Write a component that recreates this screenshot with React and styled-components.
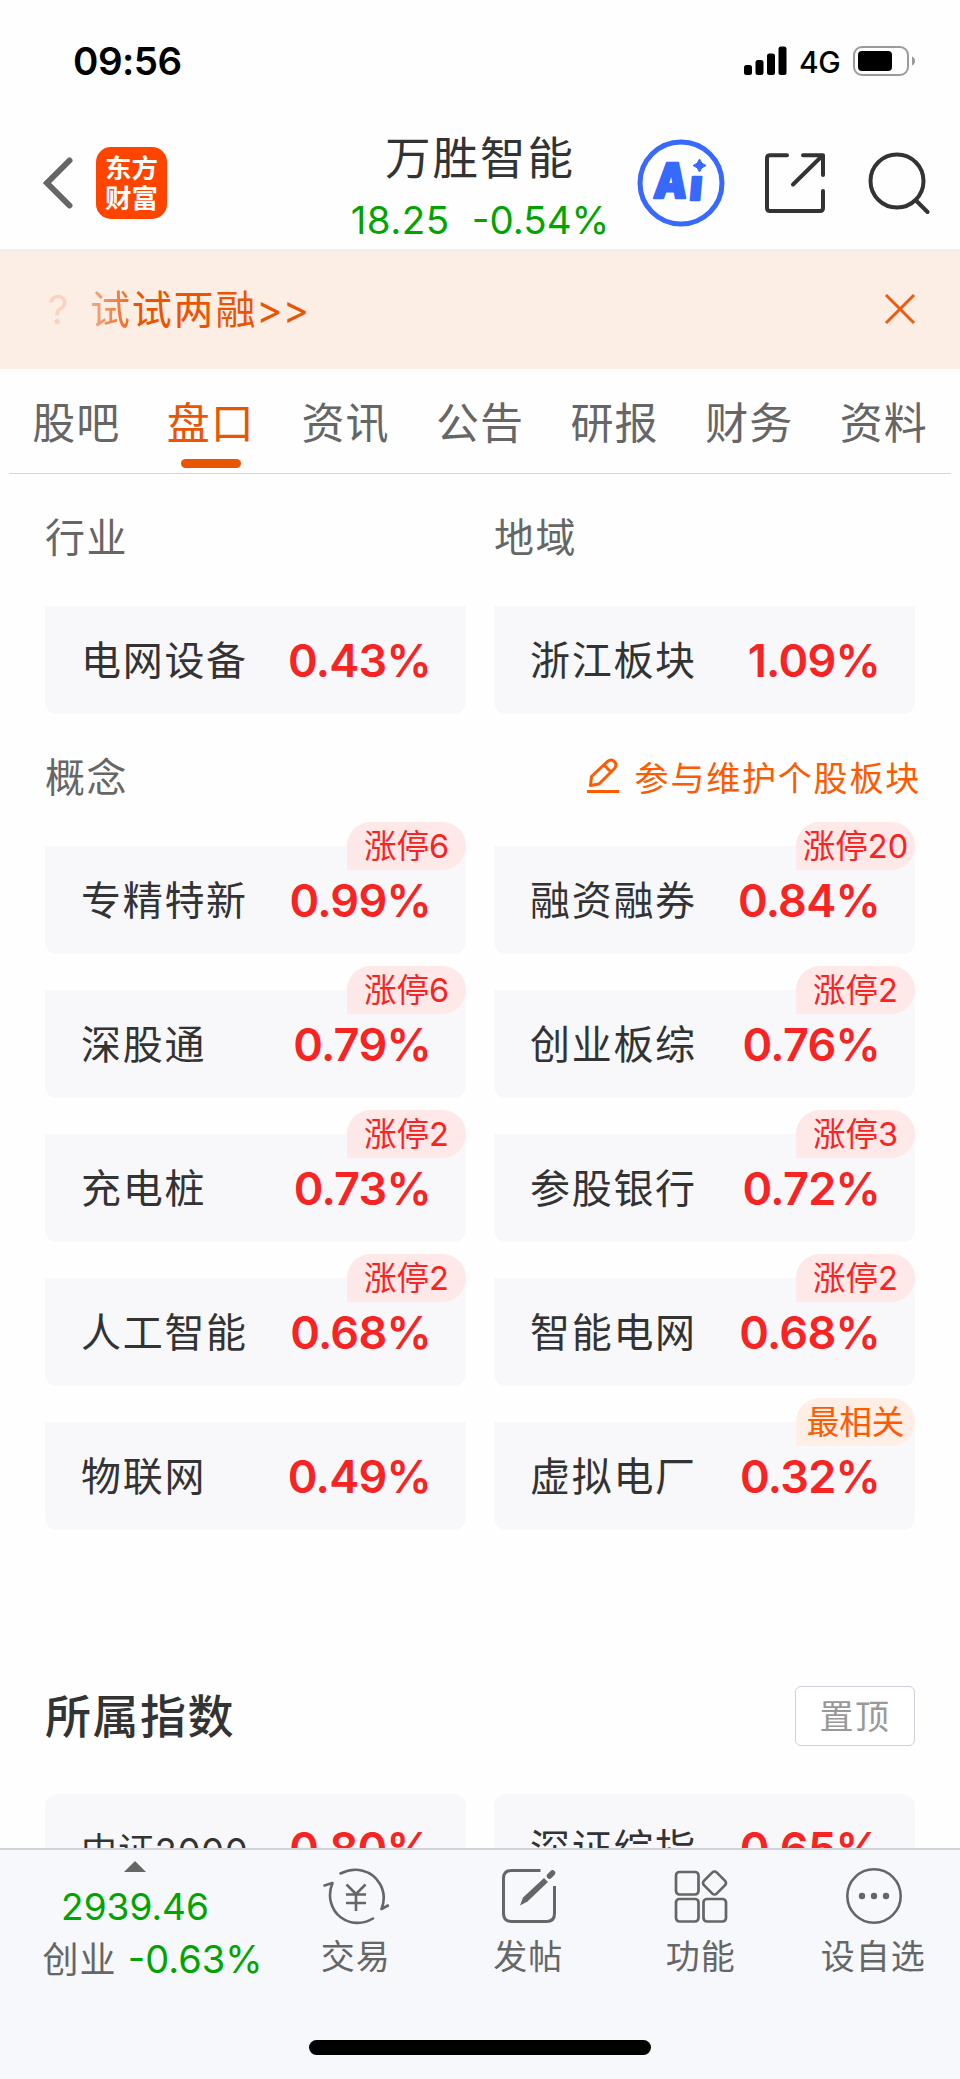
import React from 'react'
import styled, { createGlobalStyle } from 'styled-components'

const tabs = ['股吧', '盘口', '资讯', '公告', '研报', '财务', '资料']

const concepts = [
    { name: '专精特新', change: '0.99%', tag: '涨停6' },
    { name: '融资融券', change: '0.84%', tag: '涨停20' },
    { name: '深股通', change: '0.79%', tag: '涨停6' },
    { name: '创业板综', change: '0.76%', tag: '涨停2' },
    { name: '充电桩', change: '0.73%', tag: '涨停2' },
    { name: '参股银行', change: '0.72%', tag: '涨停3' },
    { name: '人工智能', change: '0.68%', tag: '涨停2' },
    { name: '智能电网', change: '0.68%', tag: '涨停2' },
    { name: '物联网', change: '0.49%' },
    { name: '虚拟电厂', change: '0.32%', tag: '最相关', related: true },
]

function Board({ item, top }) {
    return (
        <Card $top={top}>
            <CardName $long={item.name.length > 4}>{item.name}</CardName>
            <CardChange>{item.change}</CardChange>
            {item.tag && <Badge $related={item.related}>{item.tag}</Badge>}
        </Card>
    )
}

export default function App() {
    return (
        <Screen>
            <GlobalStyle />
            <StatusBar>
                <Time>09:56</Time>
                <StatusIcons>
                    <svg width="43" height="30" viewBox="0 0 43 30">
                        <rect x="0" y="19" width="8" height="10" rx="2.5" />
                        <rect x="11.5" y="14" width="8" height="15" rx="2.5" />
                        <rect x="23" y="7.5" width="8" height="21.500" rx="2.5" />
                        <rect x="34.5" y="0.5" width="8" height="28.5" rx="2.5" />
                    </svg>
                    <Network>4G</Network>
                    <svg width="63" height="30" viewBox="0 0 63 30">
                        <rect x="1" y="1" width="54" height="28" rx="8" fill="none" stroke="#9b9b9b" strokeWidth="2" />
                        <rect x="5" y="5" width="34" height="20" rx="4" />
                        <path d="M59 10.5c4 1.5 4 7.5 0 9z" fill="#9b9b9b" />
                    </svg>
                </StatusIcons>
            </StatusBar>

            <Header>
                <HeaderLeft>
                    <svg width="30" height="52" viewBox="0 0 30 52" fill="none" stroke="#666" strokeWidth="6" strokeLinecap="round">
                        <path d="M26.500 3.500 4 26l22.500 22.500" />
                    </svg>
                    <Logo>
                        <span>东方</span>
                        <span>财富</span>
                    </Logo>
                </HeaderLeft>
                <Stock>
                    <StockName>万胜智能</StockName>
                    <StockPrice>
                        <Price>18.25</Price>
                        <span>-0.54%</span>
                    </StockPrice>
                </Stock>
                <HeaderRight>
                    <AiIcon />
                    <ShareIcon />
                    <SearchIcon />
                </HeaderRight>
            </Header>

            <Notice>
                <NoticeText>
                    <Question>?</Question>
                    <FadeChar>试</FadeChar>试两融<Arrows>&gt;&gt;</Arrows>
                </NoticeText>
                <CloseIcon width="32" height="32" viewBox="0 0 32 32" fill="none" stroke="#f05a10" strokeWidth="3">
                    <path d="M2 2l28 28M30 2 2 30" />
                </CloseIcon>
            </Notice>

            <Tabs>
                {tabs.map((tab) => (
                    <Tab key={tab} $active={tab === '盘口'}>{tab}</Tab>
                ))}
            </Tabs>

            <Content>
                <Row>
                    <Label>行业</Label>
                    <Label>地域</Label>
                </Row>
                <Grid>
                    <Board item={{ name: '电网设备', change: '0.43%' }} />
                    <Board item={{ name: '浙江板块', change: '1.09%' }} />
                </Grid>
                <ConceptHead>
                    <Label>概念</Label>
                    <EditLink>
                        <svg width="34" height="36" viewBox="0 0 34 36" fill="none" stroke="#ff5a00" strokeWidth="3" strokeLinejoin="round">
                            <path d="M4.500 27.500 5.500 18.500 21.500 3.500c5-4 11 2 7 7L13 26z M18.500 7.500l7 7" />
                            <path d="M1 33.500h32" />
                        </svg>
                        参与维护个股板块
                    </EditLink>
                </ConceptHead>
                <Grid>
                    {concepts.map((item) => (
                        <Board key={item.name} item={item} />
                    ))}
                </Grid>
                <IndexHead>
                    <IndexTitle>所属指数</IndexTitle>
                    <PinButton>置顶</PinButton>
                </IndexHead>
                <Grid>
                    <Board top item={{ name: '中证2000', change: '0.80%' }} />
                    <Board top item={{ name: '深证综指', change: '0.65%' }} />
                </Grid>
            </Content>

            <BottomBar>
                <Actions>
                    <Market>
                        <svg width="22" height="11" viewBox="0 0 22 11" fill="#666">
                            <path d="M11 0 22 11H0z" />
                        </svg>
                        <MarketIndex>2939.46</MarketIndex>
                        <MarketLine>创业 <b>-0.63%</b></MarketLine>
                    </Market>
                    <Action><TradeIcon />交易</Action>
                    <Action><PostIcon />发帖</Action>
                    <Action><FeatureIcon />功能</Action>
                    <Action><MoreIcon />设自选</Action>
                </Actions>
                <HomeIndicator />
            </BottomBar>
        </Screen>
    )
}

const AiIcon = () => (
    <svg width="88" height="88" viewBox="0 0 88 88" fill="#3768ff" stroke="#3768ff">
        <circle cx="44" cy="44" r="41" fill="none" strokeWidth="5" />
        <g transform="translate(0 59) skewX(-5)" strokeWidth="2.500" strokeLinejoin="round">
            <AiText x="16" y="0" fontSize="48" textLength="33" lengthAdjust="spacingAndGlyphs">A</AiText>
            <AiText x="52" y="2" fontSize="42">ı</AiText>
        </g>
        <path d="M62.500 20q1.500 5 6.500 6.500-5 1.500-6.500 6.500-1.500-5-6.500-6.500 5-1.500 6.500-6.500z" strokeWidth="1" />
    </svg>
)

const ShareIcon = () => (
    <svg width="60" height="60" viewBox="0 0 60 60" fill="none" stroke="#333" strokeWidth="4" strokeLinecap="round" strokeLinejoin="round">
        <path d="M22 2.200H5q-3 0-3 3V55q0 3 3 3h50q3 0 3-3V38" />
        <path d="M38 2.200h20V22M57 3 28 31.500" />
    </svg>
)

const SearchIcon = () => (
    <svg width="62" height="62" viewBox="0 0 62 62" fill="none" stroke="#333" strokeWidth="4" strokeLinecap="round">
        <circle cx="29" cy="29" r="26.500" />
        <path d="M48.500 49 59.500 60" />
    </svg>
)

const TradeIcon = () => (
    <svg width="66" height="58" viewBox="0 0 66 58" fill="none" stroke="#666" strokeWidth="2.600" strokeLinecap="round" strokeLinejoin="round">
        <path d="M17.500 6.500C32-1 49 3 57 17c4 7 5 16 1.500 25l6.500-3.500" />
        <path d="M1.500 18.500 9.500 16C4 29 8 43 18 50.500c9 6.500 21 7.500 32 1" />
        <path d="M23.500 17.500 33 27l9.500-9.500M23 27.500h20M23 36h20M33 27v17" strokeLinecap="butt" />
    </svg>
)

const PostIcon = () => (
    <svg width="54" height="58" viewBox="0 0 54 58" fill="none" stroke="#666" strokeWidth="3">
        <path d="M38.500 3.500H9.500q-8 0-8 8v35q0 8 8 8h35q8 0 8-8V19" />
        <path d="M18 38.500 21 30.500 42 11l4 4-20.500 19.500z" fill="#666" stroke="none" />
        <path d="M47.500 9 50.500 6" strokeWidth="5.500" strokeLinecap="round" />
    </svg>
)

const FeatureIcon = () => (
    <svg width="54" height="58" viewBox="0 0 54 58" fill="none" stroke="#666" strokeWidth="2.700">
        <rect x="2" y="5" width="22.500" height="22.500" rx="3.500" />
        <rect x="2" y="32" width="22.500" height="22.500" rx="3.500" />
        <rect x="29.500" y="32" width="22.500" height="22.500" rx="3.500" />
        <rect x="31.500" y="7" width="18" height="18" rx="3" transform="rotate(45 40.500 16)" />
    </svg>
)

const MoreIcon = () => (
    <svg width="58" height="58" viewBox="0 0 58 58" fill="#666">
        <circle cx="29" cy="29" r="26.700" fill="none" stroke="#666" strokeWidth="2.600" />
        <circle cx="17" cy="29" r="3.200" />
        <circle cx="29" cy="29" r="3.200" />
        <circle cx="41" cy="29" r="3.200" />
    </svg>
)

const GlobalStyle = createGlobalStyle`
    * {
        box-sizing: border-box;
    }
    body {
        margin: 0;
        background: #fff;
        font-family: Inter, "Noto Sans CJK SC", sans-serif;
    }
    svg {
        display: block;
        flex-shrink: 0;
    }
`;

const Screen = styled.div`
    display: flex;
    flex-direction: column;
    width: 960px;
    height: 2079px;
    overflow: hidden;
    background: #fefefe;
    color: #333;
`;

const StatusBar = styled.div`
    display: flex;
    justify-content: space-between;
    align-items: center;
    height: 122px;
    padding: 0 44px 0 73px;
    flex-shrink: 0;
`;

const Time = styled.div`
    font-size: 38.500px;
    font-weight: 600;
    letter-spacing: -0.500px;
    color: #000;
`;

const StatusIcons = styled.div`
    display: flex;
    align-items: center;
`;

const Network = styled.div`
    width: 66px;
    padding: 2px 0 0 12px;
    font-size: 30px;
    font-weight: 500;
    line-height: 30px;
    letter-spacing: -0.500px;
    color: #000;
`;

const Header = styled.header`
    display: grid;
    grid-template-columns: 1fr 260px 1fr;
    height: 130px;
    padding: 0 30px 0 43px;
    border-bottom: 3px solid #eee;
    flex-shrink: 0;
`;

const HeaderLeft = styled.div`
    display: flex;
    align-items: center;
    gap: 23px;
    height: 121px;
`;

const Logo = styled.div`
    display: flex;
    flex-direction: column;
    align-items: center;
    justify-content: center;
    width: 71px;
    height: 72px;
    padding-bottom: 2px;
    border-radius: 15px;
    background: #ff4400;
    color: #fff;
    font-family: "Noto Sans CJK SC", sans-serif;
    font-size: 26.500px;
    font-weight: 700;
    line-height: 30px;
`;

const Stock = styled.div`
    display: flex;
    flex-direction: column;
    align-items: center;
    margin-left: -13px;
`;

const StockName = styled.div`
    margin-top: 7px;
    font-size: 45.500px;
    line-height: 60px;
    letter-spacing: 2px;
    white-space: nowrap;
`;

const StockPrice = styled.div`
    display: flex;
    gap: 22px;
    margin-top: 7px;
    font-size: 38.500px;
    line-height: 48px;
    color: #00a400;
    white-space: nowrap;
`;

const Price = styled.span`
    letter-spacing: 0.500px;
`;

const HeaderRight = styled.div`
    display: flex;
    justify-content: flex-end;
    align-items: center;
    gap: 40px;
    height: 122px;
    svg:last-child {
        margin-left: 3px;
    }
`;

const AiText = styled.text`
    font-family: Inter, sans-serif;
    font-weight: 900;
`;

const Notice = styled.div`
    display: flex;
    justify-content: space-between;
    align-items: center;
    height: 117px;
    padding: 0 44px 2px 45px;
    background: #fdeee5;
    flex-shrink: 0;
`;

const NoticeText = styled.div`
    display: flex;
    align-items: center;
    font-size: 40px;
    line-height: 60px;
    letter-spacing: 1.800px;
    color: #ea5504;
`;

const Question = styled.span`
    width: 45px;
    padding-left: 3px;
    color: #f9d3bf;
`;

const FadeChar = styled.span`
    background: linear-gradient(to right, #f5a983 0%, #ec6a22 100%);
    -webkit-background-clip: text;
    -webkit-text-fill-color: transparent;
`;

const Arrows = styled.span`
    letter-spacing: 0;
    margin-left: -1px;
`;

const CloseIcon = styled.svg`
    margin-bottom: 1px;
`;

const Tabs = styled.nav`
    display: flex;
    height: 105px;
    margin: 0 9px;
    border-bottom: 1px solid #d6d6d6;
    flex-shrink: 0;
`;

const Tab = styled.div`
    display: flex;
    flex-direction: column;
    align-items: center;
    flex: 1;
    padding-top: 23px;
    font-size: 43px;
    line-height: 62px;
    letter-spacing: 1px;
    color: ${props => props.$active ? '#ea5504' : '#666'};
    &:after {
        content: '';
        display: ${props => props.$active ? 'block' : 'none'};
        width: 60px;
        height: 9px;
        margin-top: 5px;
        border-radius: 5px;
        background: #ea5504;
    }
`;

const Content = styled.main`
    flex: 1;
    min-height: 0;
    overflow: hidden;
    padding: 0 45px;
`;

const Row = styled.div`
    display: grid;
    grid-template-columns: 1fr 1fr;
    column-gap: 28px;
    height: 132px;
    padding-top: 34px;
`;

const Label = styled.div`
    font-size: 40px;
    line-height: 60px;
    letter-spacing: 1.500px;
    color: #666;
`;

const Grid = styled.div`
    display: grid;
    grid-template-columns: 421px 421px;
    gap: 36px 28px;
`;

const Card = styled.div`
    position: relative;
    display: flex;
    justify-content: space-between;
    align-items: center;
    height: 108px;
    padding: 0 35px 0 36px;
    border-radius: ${props => props.$top ? '12px' : '0 0 12px 12px'};
    background: #f8f8fb;
`;

const CardName = styled.span`
    margin-bottom: ${props => props.$long ? '1px' : '4px'};
    font-size: ${props => props.$long ? '36px' : '40px'};
    letter-spacing: ${props => props.$long ? '0.900px' : '1.700px'};
    white-space: nowrap;
`;

const CardChange = styled.span`
    font-size: 45px;
    font-weight: 600;
    letter-spacing: -0.700px;
    color: #f82323;
`;

const Badge = styled.div`
    position: absolute;
    top: -24px;
    right: 0;
    width: 119px;
    height: 48px;
    padding-top: 1px;
    border-radius: 26px 26px 26px 0;
    background: ${props => props.$related ? '#ffeee5' : '#ffe8e8'};
    color: ${props => props.$related ? '#ff5a00' : '#f82323'};
    font-size: 32.500px;
    line-height: 48px;
    text-align: center;
    white-space: nowrap;
`;

const ConceptHead = styled.div`
    display: flex;
    justify-content: space-between;
    height: 132px;
    padding-top: 34px;
`;

const EditLink = styled.div`
    display: flex;
    align-items: center;
    gap: 15px;
    height: 56px;
    margin-right: -6px;
    font-size: 34px;
    letter-spacing: 1.800px;
    color: #ff5a00;
`;

const IndexHead = styled.div`
    display: flex;
    justify-content: space-between;
    align-items: center;
    height: 60px;
    margin: 156px 0 48px;
`;

const IndexTitle = styled.h2`
    margin: 0;
    font-size: 46px;
    font-weight: 500;
    line-height: 60px;
    letter-spacing: 1.500px;
`;

const PinButton = styled.button`
    width: 120px;
    height: 60px;
    padding: 0 0 3px;
    border: 1px solid #d0d0da;
    border-radius: 6px;
    background: #fff;
    color: #999;
    font-family: inherit;
    font-size: 34px;
    letter-spacing: 1.500px;
`;

const BottomBar = styled.footer`
    display: flex;
    flex-direction: column;
    align-items: center;
    height: 231px;
    border-top: 2px solid #d0d3da;
    background: #f7f8fb;
    flex-shrink: 0;
`;

const Actions = styled.div`
    display: grid;
    grid-template-columns: 270px repeat(4, 172.500px);
    width: 960px;
    height: 190px;
`;

const Market = styled.div`
    display: flex;
    flex-direction: column;
    align-items: center;
    padding-top: 11px;
`;

const MarketIndex = styled.div`
    margin-top: 13px;
    font-size: 37px;
    line-height: 44px;
    color: #00a400;
`;

const MarketLine = styled.div`
    margin: 3px 0 0 35px;
    font-size: 36px;
    line-height: 54px;
    letter-spacing: 1px;
    color: #666;
    white-space: nowrap;
    b {
        font-size: 38px;
        font-weight: 400;
        letter-spacing: 0;
        color: #00a400;
    }
`;

const Action = styled.div`
    display: flex;
    flex-direction: column;
    align-items: center;
    gap: 7px;
    padding: 17px 1px 0 0;
    font-size: 34px;
    line-height: 50px;
    letter-spacing: 1px;
    color: #666;
    svg {
        margin-left: 1px;
    }
`;

const HomeIndicator = styled.div`
    width: 342px;
    height: 15px;
    border-radius: 8px;
    background: #000;
`;
